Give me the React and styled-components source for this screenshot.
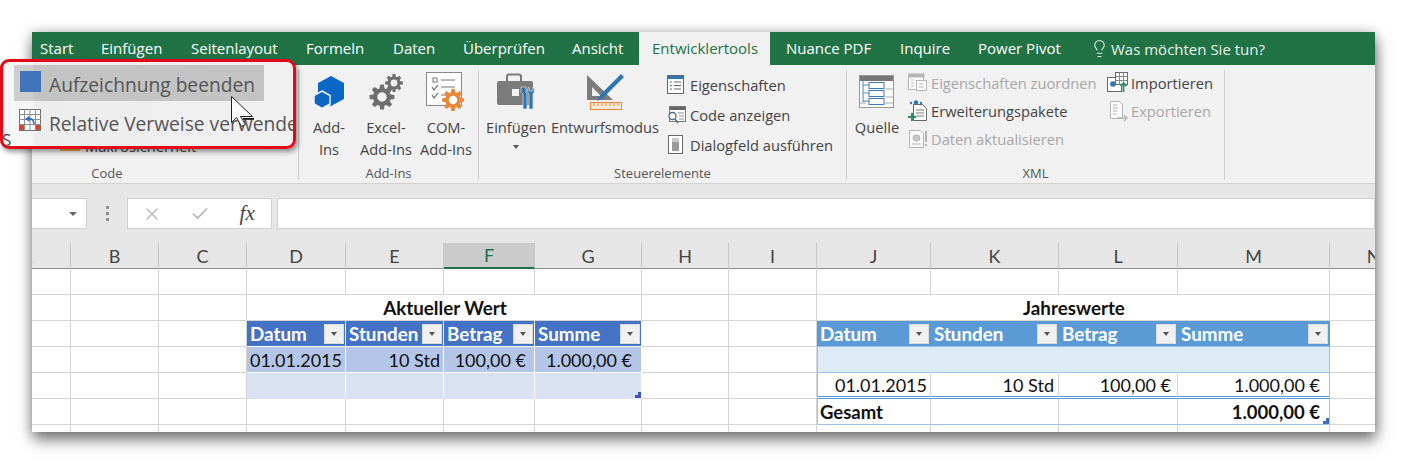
import React from 'react'
import styled, { createGlobalStyle, css } from 'styled-components'
import { Check, Lightbulb, X } from 'lucide-react'

const UI_FONT = '"Open Sans", "Noto Sans", sans-serif'
const SHEET_FONT = 'Lato, "Liberation Sans", sans-serif'

const GlobalStyle = createGlobalStyle`
  html, body {
    margin: 0;
    background: #fff;
  }
`

const Page = styled.div`
  position: relative;
  width: 1407px;
  height: 465px;
  padding: 32px 0 0 32px;
  box-sizing: border-box;
  overflow: hidden;
  font-family: ${UI_FONT};
`

const Window = styled.div`
  width: 1343px;
  height: 400px;
  overflow: hidden;
  background: #fff;
  box-shadow: 1px 8px 14px rgba(0, 0, 0, 0.5), 0 0 12px rgba(0, 0, 0, 0.22);
`

const TabBar = styled.div`
  display: flex;
  height: 33px;
  margin-left: -5px;
  background: #217346;
`

const Tab = styled.div`
  flex: none;
  width: ${(p) => p.$w}px;
  padding-left: 13px;
  box-sizing: border-box;
  font-size: 15px;
  line-height: 33px;
  white-space: nowrap;
  color: #fff;
  ${(p) =>
    p.$active &&
    css`
      background: #f1f1f1;
      color: #217346;
      margin-right: 3px;
    `}
`

const TellMe = styled.div`
  display: flex;
  align-items: center;
  gap: 2px;
  font-size: 15px;
  color: #e8f1ec;
  white-space: nowrap;
`

const Ribbon = styled.div`
  display: flex;
  height: 119px;
  padding: 5px 0 3px;
  box-sizing: border-box;
  background: #f1f1f1;
  border-bottom: 1px solid #d2d2d2;
  font-size: 14.7px;
  color: #444;
`

const Group = styled.div`
  flex: none;
  display: flex;
  flex-direction: column;
  width: ${(p) => p.$w}px;
  box-sizing: border-box;
  border-right: 1px solid #cdcdcd;
`

const GroupBody = styled.div`
  flex: 1;
  display: flex;
  min-height: 0;
  padding-left: ${(p) => p.$pad || 0}px;
`

const GroupLabel = styled.div`
  height: 17px;
  line-height: 21px;
  font-size: 13px;
  text-align: center;
  color: #555;
  padding-right: ${(p) => p.$shift || 0}px;
`

const LargeButton = styled.div`
  flex: none;
  width: ${(p) => p.$w}px;
  display: flex;
  flex-direction: column;
  align-items: center;
  line-height: 22px;
  text-align: center;
  white-space: nowrap;
`

const IconSlot = styled.div`
  height: 44px;
  margin-bottom: 2px;
  display: flex;
  align-items: center;
  justify-content: center;
`

const Caret = styled.span`
  display: block;
  width: 0;
  height: 0;
  margin: 7px auto 0;
  border: 3.5px solid transparent;
  border-top: 4px solid #555;
  border-bottom: 0;
`

const SmallColumn = styled.div`
  flex: none;
  width: ${(p) => p.$w}px;
  margin: ${(p) => -(p.$up ?? 1)}px 0 0 ${(p) => p.$gap || 0}px;
  display: flex;
  flex-direction: column;
`

const SmallItem = styled.div`
  display: flex;
  align-items: center;
  gap: ${(p) => p.$gap || 4}px;
  height: ${(p) => p.$h}px;
  white-space: nowrap;
  color: ${(p) => (p.$off ? '#a8a8a8' : '#444')};
`

const HiddenEntry = styled.div`
  display: flex;
  align-items: center;
  gap: 5px;
  margin: 65px 0 0 28px;
  height: 22px;
  white-space: nowrap;
`

const YellowMark = styled.span`
  width: 20px;
  height: 10px;
  background: #e3ab42;
`

const FormulaArea = styled.div`
  display: flex;
  height: 59px;
  padding: 14px 0;
  box-sizing: border-box;
  background: #e6e6e6;
`

const FieldBox = styled.div`
  flex: none;
  display: flex;
  align-items: center;
  box-sizing: border-box;
  width: ${(p) => p.$w}px;
  margin-right: ${(p) => p.$gap || 0}px;
  background: #fff;
  border: 1px solid #d0d0d0;
  border-left-width: ${(p) => (p.$flushLeft ? 0 : 1)}px;
`

const NameCaret = styled.span`
  width: 0;
  height: 0;
  margin-left: 37px;
  border: 4px solid transparent;
  border-top: 4px solid #666;
  border-bottom: 0;
`

const DotsColumn = styled.div`
  flex: none;
  width: 40px;
  display: flex;
  flex-direction: column;
  align-items: center;
  justify-content: center;
  gap: 3px;
`

const Dot = styled.span`
  width: 3px;
  height: 3px;
  background: #909090;
`

const FormulaTool = styled.span`
  width: 48px;
  display: flex;
  align-items: center;
  justify-content: center;
  color: ${(p) => (p.$on ? '#555' : '#b5b5b5')};
`

const FxMark = styled.span`
  font-family: 'Liberation Serif', serif;
  font-style: italic;
  font-size: 21px;
  color: #444;
`

const ColumnsRow = styled.div`
  display: grid;
  grid-template-columns: ${(p) => p.$cols};
  margin-left: -50px;
  width: 1500px;
  background: #e6e6e6;
  height: 25px;
  border-bottom: 1px solid #8e8e8e;
`

const ColumnHead = styled.div`
  position: relative;
  display: flex;
  align-items: center;
  justify-content: center;
  box-sizing: border-box;
  border-right: 1px solid #c8c8c8;
  font-family: ${SHEET_FONT};
  font-size: 18px;
  color: ${(p) => (p.$on ? '#217346' : '#444')};
  ${(p) =>
    p.$on &&
    css`
      background: #cbcbcb;
      border-bottom: 2px solid #217346;
      height: 26px;
    `}
`

const SheetGrid = styled.div`
  display: grid;
  grid-template-columns: ${(p) => p.$cols};
  grid-auto-rows: 26px;
  margin-left: -50px;
  width: 1500px;
  font-family: ${SHEET_FONT};
  font-size: 18px;
  color: #111;
`

const KINDS = {
  plain: css``,
  title: css`
    justify-content: center;
    font-weight: bold;
    font-size: 18.8px;
  `,
  headA: css`
    background: #4472c4;
    color: #fff;
    font-weight: bold;
    font-size: 18.8px;
    border-right-color: #fff;
    border-bottom-color: #fff;
  `,
  headB: css`
    background: #5b9bd5;
    color: #fff;
    font-weight: bold;
    font-size: 18.8px;
    border-right-color: #5b9bd5;
    border-bottom-color: #9bc2e6;
  `,
  darkBand: css`
    background: #b4c6e7;
    border-right-color: #fff;
    border-bottom-color: #fff;
  `,
  lightBand: css`
    background: #d9e1f2;
    border-right-color: #fff;
    border-bottom-color: #d9e1f2;
  `,
  skyBand: css`
    background: #ddebf7;
    border-right-color: #ddebf7;
    border-bottom-color: #9bc2e6;
  `,
  value: css`
    border-bottom: 3px double #5b9bd5;
  `,
  total: css`
    font-weight: bold;
    font-size: 18.5px;
    border-bottom-color: #9bc2e6;
  `,
}

const Cell = styled.div`
  position: relative;
  display: flex;
  align-items: center;
  box-sizing: border-box;
  min-width: 0;
  white-space: nowrap;
  border-right: 1px solid #d4d4d4;
  border-bottom: 1px solid #d4d4d4;
  justify-content: ${(p) => (p.$right ? 'flex-end' : 'space-between')};
  padding: 0 ${(p) => p.$padR ?? 1}px 0 ${(p) => (p.$right ? 0 : p.$edgeL ? 2 : 3)}px;
  grid-column: span ${(p) => p.$span || 1};
  ${(p) => KINDS[p.$kind || 'plain']}
  ${(p) => p.$edgeL && 'border-left: 1px solid #9bc2e6;'}
  ${(p) => p.$edgeR && 'border-right: 1px solid #9bc2e6;'}
`

const FilterButton = styled.span`
  flex: none;
  width: 20px;
  height: 20px;
  display: flex;
  align-items: center;
  justify-content: center;
  background: #f0f0f0;
  border: 1px solid #dcdcdc;
  box-sizing: border-box;
  &::after {
    content: '';
    border: 3.5px solid transparent;
    border-top: 4px solid #555;
    border-bottom: 0;
  }
`

const ResizeHandle = styled.span`
  position: absolute;
  right: 0;
  bottom: 0;
  width: 6px;
  height: 6px;
  background: ${(p) => p.$color};
  clip-path: polygon(100% 0, 100% 100%, 0 100%, 0 50%, 50% 50%, 50% 0);
`

const Overlay = styled.div`
  position: absolute;
  left: 0;
  top: 59px;
  width: 296px;
  height: 90px;
  box-sizing: border-box;
  border: 3px solid #e30a17;
  border-radius: 9px;
  overflow: hidden;
  padding: 3px 0 0 11px;
  background: linear-gradient(to right, #f6f6f6 29px, #ededed 32px, #f0f0f0 100%);
  box-shadow: 2px 3px 5px rgba(0, 0, 0, 0.4);
  color: #555;
  font-size: 19.2px;
`

const OverlayRow = styled.div`
  display: flex;
  align-items: center;
  gap: 8px;
  width: 250px;
  height: 36px;
  margin-bottom: 3px;
  padding: 3px 0 0 ${(p) => p.$pad}px;
  box-sizing: border-box;
  white-space: nowrap;
  background: ${(p) => (p.$on ? 'linear-gradient(to right, #cdcdcd 18px, #c3c3c3 21px)' : 'none')};
`

const StopSquare = styled.span`
  flex: none;
  width: 21px;
  height: 21px;
  margin-top: -6px;
  background: #3f74b9;
`

const RelativeSvg = styled.svg`
  flex: none;
  margin-top: -7px;
`

const PeekLetter = styled.span`
  position: absolute;
  left: -1px;
  bottom: -5px;
  font-size: 17px;
  color: #444;
`

const PointerSvg = styled.svg`
  position: absolute;
  left: 230px;
  top: 95px;
`

const gearPath = (cx, cy, r, teeth = 8) => {
  const pts = []
  const inner = r * 0.72
  const step = (Math.PI * 2) / teeth
  for (let i = 0; i < teeth; i++) {
    const a = i * step
    const w = step * 0.24
    const at = (rad, ang) => `${(cx + rad * Math.cos(ang)).toFixed(1)} ${(cy + rad * Math.sin(ang)).toFixed(1)}`
    pts.push(at(inner, a - w * 1.5), at(r, a - w * 0.8), at(r, a + w * 0.8), at(inner, a + w * 1.5))
  }
  const h = r * 0.38
  return `M${pts.join('L')}Z M${cx - h} ${cy}a${h} ${h} 0 1 0 ${h * 2} 0a${h} ${h} 0 1 0 ${-h * 2} 0Z`
}

const AddInsIcon = () => (
  <svg width="34" height="34" viewBox="0 0 34 34">
    <path d="M19 1l13 7v16l-13 7-13-7V8z" fill="#0b67c4" />
    <path d="M10 16l8 4.5V29l-8 4.5L2 29v-8.500z" fill="#0b67c4" stroke="#f1f1f1" strokeWidth="1.500" />
  </svg>
)

const GearsIcon = () => (
  <svg width="34" height="38" viewBox="0 0 34 38">
    <path d={gearPath(13, 24, 12.5)} fill="#6f6f6f" fillRule="evenodd" />
    <path d={gearPath(25, 10, 9)} fill="#6f6f6f" fillRule="evenodd" />
  </svg>
)

const ChecklistIcon = () => (
  <svg width="40" height="40" viewBox="0 0 40 40">
    <rect x="0.500" y="0.500" width="35" height="33" fill="#fff" stroke="#8a8a8a" />
    <rect x="7" y="6" width="4" height="4" fill="none" stroke="#777" />
    <path d="M15 8h14M15 15h14M15 23h8" stroke="#777" />
    <path d="M6 15l2 3 4-5M6 23l2 3 4-5" fill="none" stroke="#666" strokeWidth="1.200" />
    <path d={gearPath(27, 28, 11)} fill="#e8893a" fillRule="evenodd" />
  </svg>
)

const BriefcaseIcon = () => (
  <svg width="40" height="38" viewBox="0 0 40 38">
    <rect x="11" y="1.500" width="14" height="8" rx="2" fill="none" stroke="#7a7a7a" strokeWidth="2" />
    <rect x="1" y="8" width="36" height="24" rx="2" fill="#7b7b7b" />
    <rect x="16" y="16" width="7" height="7" fill="#f4f4f4" />
    <path d="M25 14v5l2 2v15h4V21l-1-2v-5z" fill="#2e75b6" stroke="#f1f1f1" strokeWidth="0.600" />
    <path d="M33 14c-2 2-2 5 0 7v15h4V21c2-2 2-5 0-7v4h-4z" fill="#2e75b6" stroke="#f1f1f1" strokeWidth="0.600" />
  </svg>
)

const DesignIcon = () => (
  <svg width="40" height="40" viewBox="0 0 40 40">
    <path fillRule="evenodd" d="M2 3l26 25H2zM7 15v9h9z" fill="#7b7b7b" />
    <path d="M36 2l3 3-21 21-6 3 3-6z" fill="#2e75b6" />
    <rect x="5.500" y="30.500" width="31" height="7" fill="#fbe9d8" stroke="#e8893a" />
    <path d="M9 31v3M13 31v3M17 31v3M21 31v3M25 31v3M29 31v3M33 31v3" stroke="#e8893a" />
  </svg>
)

const SourceIcon = () => (
  <svg width="36" height="34" viewBox="0 0 36 34">
    <rect x="0.500" y="0.500" width="34" height="32" fill="#fff" stroke="#999" />
    <rect x="1" y="1" width="33" height="5" fill="#757575" />
    <path d="M26 14h8M26 22h8M26 28h8M1 28h6" stroke="#aaa" />
    <path d="M4 1v26M4 10h6M4 18h6M4 26h6" stroke="#4a86c5" fill="none" />
    <rect x="10" y="7.500" width="15" height="6" fill="#fff" stroke="#3b78bd" />
    <rect x="10" y="15.500" width="15" height="6" fill="#fff" stroke="#3b78bd" />
    <rect x="10" y="23.500" width="15" height="6" fill="#fff" stroke="#3b78bd" />
  </svg>
)

const PropertiesIcon = () => (
  <svg width="18" height="20" viewBox="0 0 18 20">
    <rect x="0.500" y="0.500" width="16" height="18" fill="#fff" stroke="#666" />
    <rect x="1" y="1" width="15" height="3" fill="#2e75b6" />
    <path d="M7 7h7M7 10.500h7M7 14h7" stroke="#666" />
    <path d="M3 7h2M3 10.500h2M3 14h2" stroke="#2e75b6" />
  </svg>
)

const ViewCodeIcon = () => (
  <svg width="20" height="20" viewBox="0 0 20 20">
    <rect x="2.500" y="1.500" width="16" height="15" fill="#fff" stroke="#777" />
    <rect x="3" y="2" width="15" height="3" fill="#666" />
    <path d="M11 8h6M12 11h5M12 14h5" stroke="#888" />
    <circle cx="5.500" cy="11" r="3.500" fill="#fff" stroke="#4a6c8c" strokeWidth="1.300" />
    <path d="M8 14l3 4" stroke="#4a6c8c" strokeWidth="1.600" />
  </svg>
)

const DialogIcon = () => (
  <svg width="18" height="20" viewBox="0 0 18 20">
    <rect x="1.500" y="0.500" width="14" height="18" fill="#fff" stroke="#666" />
    <rect x="5" y="3" width="7" height="13" fill="#9a9a9a" />
    <rect x="5" y="3" width="7" height="4" fill="#c9c9c9" />
  </svg>
)

const MapIcon = () => (
  <svg width="20" height="20" viewBox="0 0 20 20" stroke="#b5b5b5" fill="none">
    <rect x="0.500" y="1.500" width="15" height="15" fill="#fff" />
    <rect x="1" y="1" width="15" height="3" fill="#b5b5b5" />
    <path d="M3 7h3M3 10h3M3 13h3" />
    <rect x="8.500" y="7.500" width="10" height="10" fill="#fff" />
    <path d="M11 11h5M11 14h5" />
  </svg>
)

const PackIcon = () => (
  <svg width="20" height="22" viewBox="0 0 20 22">
    <path d="M5.500 4.500h9l4 4v12h-13z" fill="#fff" stroke="#666" />
    <path d="M8 10h8M8 13h8M8 16h8" stroke="#777" />
    <circle cx="8" cy="2.500" r="2.200" fill="#2e75b6" />
    <circle cx="3" cy="3" r="1.200" fill="#2e75b6" />
    <circle cx="13" cy="3" r="1.200" fill="#2e75b6" />
    <path d="M4 13v8M0 17h8" stroke="#2c8f62" strokeWidth="2" />
  </svg>
)

const RefreshIcon = () => (
  <svg width="20" height="20" viewBox="0 0 20 20" fill="none" stroke="#b5b5b5">
    <path d="M1.500 1.500h11l3 3v14h-14z" fill="#fafafa" />
    <ellipse cx="8.500" cy="9" rx="3.500" ry="3" fill="#c8c8c8" />
    <path d="M18 2v11M18 15v2" strokeWidth="2" />
    <path d="M4 15h9" />
  </svg>
)

const ImportIcon = () => (
  <svg width="22" height="22" viewBox="0 0 22 22">
    <rect x="0.500" y="5.500" width="14" height="14" fill="#fff" stroke="#666" />
    <rect x="8.500" y="0.500" width="12" height="12" fill="#fff" stroke="#666" />
    <path d="M8.500 4.500h12M8.500 8.500h12M12.500 0.500v12M16.500 0.500v12" stroke="#888" />
    <circle cx="6" cy="12" r="2.800" fill="#2e75b6" />
    <path d="M16.500 20v-9M13.500 14l3-3 3 3" fill="none" stroke="#2c8f62" strokeWidth="1.800" />
  </svg>
)

const ExportIcon = () => (
  <svg width="22" height="22" viewBox="0 0 22 22" fill="none" stroke="#b5b5b5">
    <path d="M3.500 1.500h9l3 3v14h-12z" fill="#fafafa" />
    <path d="M6 5h4M6 8h5M6 11h4M6 14h3" />
    <path d="M10 18h10M17 15l3 3-3 3" strokeWidth="1.400" />
  </svg>
)

const RelativeIcon = () => (
  <RelativeSvg width="22" height="22" viewBox="0 0 22 22">
    <rect x="0.500" y="0.500" width="21" height="21" fill="#fff" stroke="#6d6d6d" />
    <path d="M0 5.500h22M0 10.500h22M0 15.500h22M5.500 0v22M11 0v22M16.500 0v22" stroke="#8d8d8d" />
    <rect x="1" y="16" width="4" height="5" fill="#d9432f" />
    <rect x="17" y="16" width="4" height="5" fill="#d9432f" />
    <path d="M15 15c0-4-3-6-6-5" fill="none" stroke="#2e75b6" strokeWidth="1.800" />
    <path d="M10.500 6.500L6 10l4.500 3z" fill="#2e75b6" />
  </RelativeSvg>
)

const COLS = [
  ['A', 89], ['B', 88], ['C', 88], ['D', 99], ['E', 98], ['F', 91], ['G', 107],
  ['H', 87], ['I', 88], ['J', 114], ['K', 128], ['L', 119], ['M', 152], ['N', 88],
]
const COL_TEMPLATE = COLS.map(([, w]) => `${w}px`).join(' ')

const TABS = [
  ['Start', 61], ['Einfügen', 90], ['Seitenlayout', 115], ['Formeln', 87], ['Daten', 70],
  ['Überprüfen', 109], ['Ansicht', 80], ['Entwicklertools', 131], ['Nuance PDF', 114],
  ['Inquire', 78], ['Power Pivot', 125],
]

const blanks = (n) => Array.from({ length: n }, () => ({}))

const ROWS = [
  blanks(14),
  [
    ...blanks(3),
    { kind: 'title', span: 4, text: 'Aktueller Wert' },
    ...blanks(2),
    { kind: 'title', span: 4, text: 'Jahreswerte' },
    {},
  ],
  [
    ...blanks(3),
    { kind: 'headA', text: 'Datum', filter: true },
    { kind: 'headA', text: 'Stunden', filter: true },
    { kind: 'headA', text: 'Betrag', filter: true },
    { kind: 'headA', text: 'Summe', filter: true },
    ...blanks(2),
    { kind: 'headB', text: 'Datum', filter: true },
    { kind: 'headB', text: 'Stunden', filter: true },
    { kind: 'headB', text: 'Betrag', filter: true },
    { kind: 'headB', text: 'Summe', filter: true },
    {},
  ],
  [
    ...blanks(3),
    { kind: 'darkBand', text: '01.01.2015', right: true, padR: 3 },
    { kind: 'darkBand', text: '10 Std', right: true, padR: 3 },
    { kind: 'darkBand', text: '100,00 €', right: true, padR: 8 },
    { kind: 'darkBand', text: '1.000,00 €', right: true, padR: 9 },
    ...blanks(2),
    { kind: 'skyBand', edgeL: true },
    { kind: 'skyBand' },
    { kind: 'skyBand' },
    { kind: 'skyBand', edgeR: true },
    {},
  ],
  [
    ...blanks(3),
    { kind: 'lightBand' },
    { kind: 'lightBand' },
    { kind: 'lightBand' },
    { kind: 'lightBand', handle: '#3f55b5' },
    ...blanks(2),
    { kind: 'value', text: '01.01.2015', right: true, padR: 3, edgeL: true },
    { kind: 'value', text: '10 Std', right: true, padR: 4 },
    { kind: 'value', text: '100,00 €', right: true, padR: 6 },
    { kind: 'value', text: '1.000,00 €', right: true, padR: 9, edgeR: true },
    {},
  ],
  [
    ...blanks(9),
    { kind: 'total', text: 'Gesamt', edgeL: true },
    { kind: 'total' },
    { kind: 'total' },
    { kind: 'total', text: '1.000,00 €', right: true, padR: 9, edgeR: true, handle: '#3f6fc0' },
    {},
  ],
  blanks(14),
]

export default function App() {
  return (
    <Page>
      <GlobalStyle />
      <Window>
        <TabBar>
          {TABS.map(([label, w]) => (
            <Tab key={label} $w={w} $active={label === 'Entwicklertools'}>
              {label}
            </Tab>
          ))}
          <TellMe>
            <Lightbulb size={19} strokeWidth={1.3} />
            Was möchten Sie tun?
          </TellMe>
        </TabBar>

        <Ribbon>
          <Group $w={267}>
            <GroupBody>
              <HiddenEntry>
                <YellowMark />
                Makrosicherheit
              </HiddenEntry>
            </GroupBody>
            <GroupLabel $shift={116}>Code</GroupLabel>
          </Group>

          <Group $w={180}>
            <GroupBody $pad={2}>
              <LargeButton $w={56}>
                <IconSlot><AddInsIcon /></IconSlot>
                Add-<br />Ins
              </LargeButton>
              <LargeButton $w={58}>
                <IconSlot><GearsIcon /></IconSlot>
                Excel-<br />Add-Ins
              </LargeButton>
              <LargeButton $w={62}>
                <IconSlot><ChecklistIcon /></IconSlot>
                COM-<br />Add-Ins
              </LargeButton>
            </GroupBody>
            <GroupLabel>Add-Ins</GroupLabel>
          </Group>

          <Group $w={368}>
            <GroupBody $pad={1}>
              <LargeButton $w={72}>
                <IconSlot><BriefcaseIcon /></IconSlot>
                Einfügen
                <Caret />
              </LargeButton>
              <LargeButton $w={106}>
                <IconSlot><DesignIcon /></IconSlot>
                Entwurfsmodus
              </LargeButton>
              <SmallColumn $w={180} $gap={9} $up={0}>
                <SmallItem $h={30} $gap={5}><PropertiesIcon />Eigenschaften</SmallItem>
                <SmallItem $h={30} $gap={3}><ViewCodeIcon />Code anzeigen</SmallItem>
                <SmallItem $h={30} $gap={5}><DialogIcon />Dialogfeld ausführen</SmallItem>
              </SmallColumn>
            </GroupBody>
            <GroupLabel>Steuerelemente</GroupLabel>
          </Group>

          <Group $w={378}>
            <GroupBody $pad={1}>
              <LargeButton $w={58}>
                <IconSlot><SourceIcon /></IconSlot>
                Quelle
              </LargeButton>
              <SmallColumn $w={199} $gap={2} $up={1}>
                <SmallItem $h={28} $gap={3} $off><MapIcon />Eigenschaften zuordnen</SmallItem>
                <SmallItem $h={28} $gap={3}><PackIcon />Erweiterungspakete</SmallItem>
                <SmallItem $h={28} $gap={3} $off><RefreshIcon />Daten aktualisieren</SmallItem>
              </SmallColumn>
              <SmallColumn $w={110} $up={1}>
                <SmallItem $h={28} $gap={2}><ImportIcon />Importieren</SmallItem>
                <SmallItem $h={28} $gap={2} $off><ExportIcon />Exportieren</SmallItem>
              </SmallColumn>
            </GroupBody>
            <GroupLabel>XML</GroupLabel>
          </Group>
        </Ribbon>

        <FormulaArea>
          <FieldBox $w={55} $flushLeft>
            <NameCaret />
          </FieldBox>
          <DotsColumn>
            <Dot />
            <Dot />
            <Dot />
          </DotsColumn>
          <FieldBox $w={145} $gap={5}>
            <FormulaTool><X size={20} strokeWidth={1.5} /></FormulaTool>
            <FormulaTool><Check size={20} strokeWidth={2} /></FormulaTool>
            <FormulaTool $on><FxMark>fx</FxMark></FormulaTool>
          </FieldBox>
          <FieldBox $w={1098} />
        </FormulaArea>

        <ColumnsRow $cols={COL_TEMPLATE}>
          {COLS.map(([name]) => (
            <ColumnHead key={name} $on={name === 'F'}>{name}</ColumnHead>
          ))}
        </ColumnsRow>

        <SheetGrid $cols={COL_TEMPLATE}>
          {ROWS.map((row, r) =>
            row.map((c, i) => (
              <Cell
                key={`${r}-${i}`}
                $kind={c.kind}
                $span={c.span}
                $right={c.right}
                $padR={c.padR}
                $edgeL={c.edgeL}
                $edgeR={c.edgeR}
              >
                {c.text && <span>{c.text}</span>}
                {c.filter && <FilterButton />}
                {c.handle && <ResizeHandle $color={c.handle} />}
              </Cell>
            ))
          )}
        </SheetGrid>
      </Window>

      <Overlay>
        <OverlayRow $on $pad={6}>
          <StopSquare />
          Aufzeichnung beenden
        </OverlayRow>
        <OverlayRow $pad={5}>
          <RelativeIcon />
          Relative Verweise verwenden
        </OverlayRow>
        <PeekLetter>S</PeekLetter>
      </Overlay>

      <PointerSvg width="26" height="34" viewBox="0 0 26 34">
        <path d="M1.500 1.500v26l5-5 5 9 4-2-5-8h12z" fill="#fff" stroke="#222" strokeWidth="1" />
        <rect x="13" y="23" width="11" height="1.800" fill="#111" />
      </PointerSvg>
    </Page>
  )
}
